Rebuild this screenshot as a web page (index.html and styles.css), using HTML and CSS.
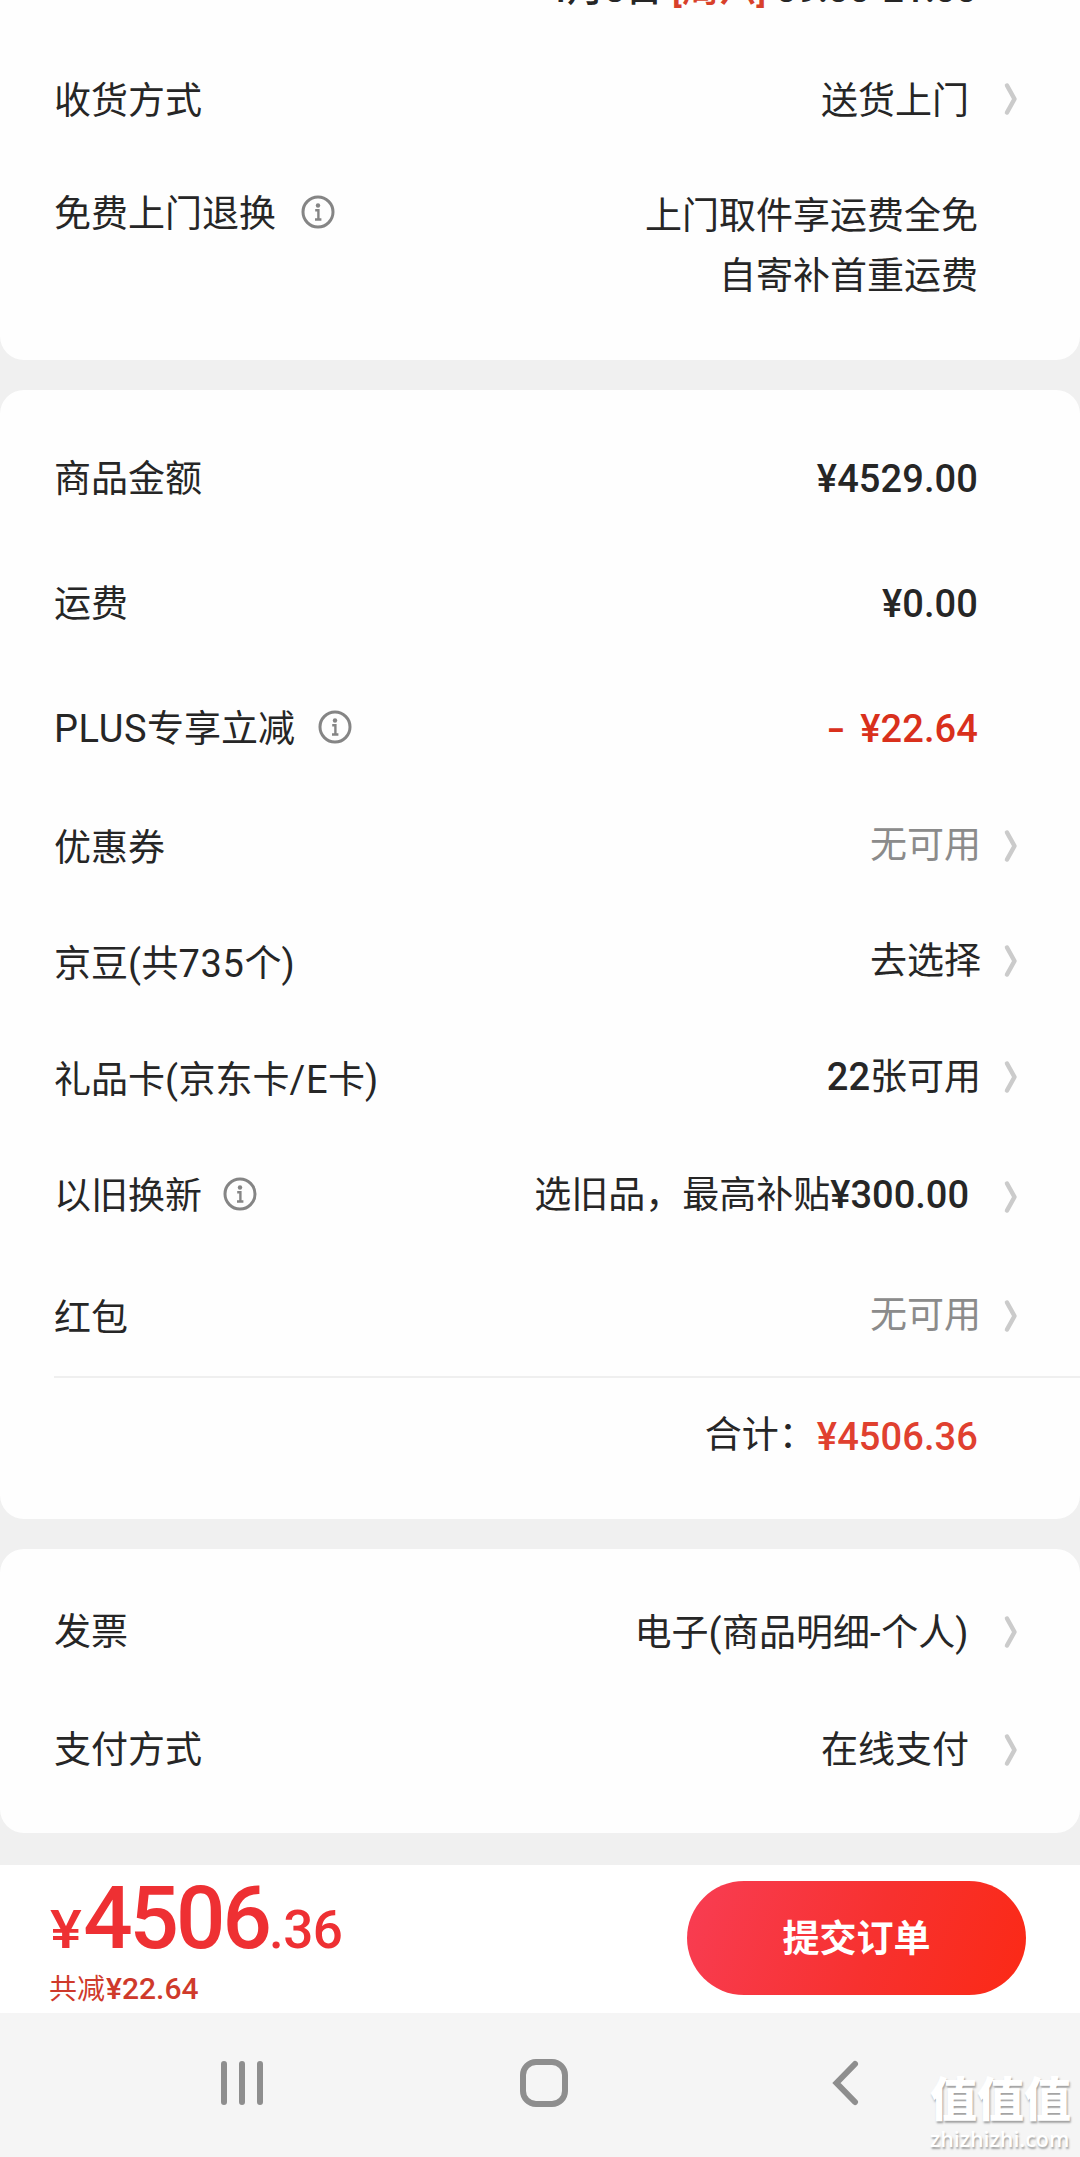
FILE: index.html
```
<!DOCTYPE html>
<html lang="zh-CN">
<head>
<meta charset="utf-8">
<title>填写订单</title>
<link rel="stylesheet" href="styles.css">
</head>
<body>
<svg class="sprite" width="0" height="0" aria-hidden="true">
  <symbol id="chevron" viewBox="0 0 16 34"><path d="M4 3.500 11.500 17 4 30.500" fill="none" stroke="#cbcbcb" stroke-width="4.500" stroke-linecap="round" stroke-linejoin="round"/></symbol>
  <symbol id="info" viewBox="0 0 34 34"><circle cx="17" cy="17" r="15" fill="none" stroke="#858585" stroke-width="3"/><circle cx="17" cy="10.500" r="2.200" fill="#858585"/><path d="M14.200 15.300h3.200v9M14 24.500h6.400" fill="none" stroke="#858585" stroke-width="2.400"/></symbol>
</svg>
<main class="page">
  <section class="card card--delivery">
    <div class="date"><span>4月8日 <em>[周六]</em> 09:00-21:00</span></div>
    <div class="row row--method">
      <span class="label">收货方式</span>
      <span class="value">送货上门</span>
      <svg class="chevron chevron--up"><use href="#chevron"/></svg>
    </div>
    <div class="row row--return">
      <span class="label">免费上门退换</span>
      <svg class="info info--wide"><use href="#info"/></svg>
      <span class="value value--lines">上门取件享运费全免<br>自寄补首重运费</span>
    </div>
  </section>

  <section class="card card--amounts">
    <div class="row row--sum"><span class="label">商品金额</span><span class="value num">¥4529.00</span></div>
    <div class="row row--sum"><span class="label">运费</span><span class="value num">¥0.00</span></div>
    <div class="row row--sum">
      <span class="label"><span class="latin">PLUS</span>专享立减</span>
      <svg class="info info--high info--plus"><use href="#info"/></svg>
      <span class="value num num--red"><span class="minus">-</span>¥22.64</span>
    </div>
    <div class="row row--coupon"><span class="label">优惠券</span><span class="value value--near value--muted">无可用</span><svg class="chevron chevron--up"><use href="#chevron"/></svg></div>
    <div class="row row--bean"><span class="label">京豆<span class="latin">(</span>共<span class="latin">735</span>个<span class="latin">)</span></span><span class="value value--near">去选择</span><svg class="chevron chevron--up"><use href="#chevron"/></svg></div>
    <div class="row row--card"><span class="label">礼品卡<span class="latin">(</span>京东卡<span class="latin">/E</span>卡<span class="latin">)</span></span><span class="value value--near"><b>22</b>张可用</span><svg class="chevron chevron--up"><use href="#chevron"/></svg></div>
    <div class="row row--trade">
      <span class="label">以旧换新</span>
      <svg class="info info--high"><use href="#info"/></svg>
      <span class="value">选旧品，最高补贴<b>¥300.00</b></span>
      <svg class="chevron"><use href="#chevron"/></svg>
    </div>
    <div class="row row--packet"><span class="label">红包</span><span class="value value--near value--muted">无可用</span><svg class="chevron chevron--up"><use href="#chevron"/></svg></div>
    <div class="row row--total"><span class="value">合计：</span><span class="num num--total">¥4506.36</span></div>
  </section>

  <section class="card card--payment">
    <div class="row"><span class="label">发票</span><span class="value">电子<span class="latin">(</span>商品明细<span class="latin">-</span>个人<span class="latin">)</span></span><svg class="chevron"><use href="#chevron"/></svg></div>
    <div class="row"><span class="label">支付方式</span><span class="value">在线支付</span><svg class="chevron"><use href="#chevron"/></svg></div>
  </section>

  <footer class="checkout">
    <div class="price">
      <div class="price__total"><span class="price__unit">¥</span><strong>4506</strong><span class="price__cents">.36</span></div>
      <div class="price__saved">共减<b>¥22.64</b></div>
    </div>
    <button class="submit" type="button">提交订单</button>
  </footer>

  <nav class="system">
    <svg class="system__recent" width="42" height="48" viewBox="0 0 42 48"><path d="M3 5v38M21 5v38M39 5v38" stroke="#8e8e8e" stroke-width="6" stroke-linecap="round"/></svg>
    <svg class="system__home" width="48" height="48" viewBox="0 0 48 48"><rect x="3" y="3" width="42" height="42" rx="13" fill="none" stroke="#8e8e8e" stroke-width="6"/></svg>
    <svg class="system__back" width="28" height="48" viewBox="0 0 28 48"><path d="M24 5 5.500 24 24 43" fill="none" stroke="#8e8e8e" stroke-width="6" stroke-linecap="round"/></svg>
    <div class="watermark"><span class="watermark__name">值值值</span><span class="watermark__site">zhizhizhi.com</span></div>
  </nav>
</main>
</body>
</html>
```
FILE: styles.css
```
* { box-sizing: border-box; }

body {
  margin: 0;
  background: #f0f0f0;
  color: #262626;
  font: 37px/60px Roboto, "Noto Sans CJK SC", sans-serif;
}

.sprite { display: block; height: 0; }

.page {
  width: 1080px;
  height: 2157px;
  overflow: hidden;
  display: flex;
  flex-direction: column;
}

.card {
  background: #fefefe;
  border-radius: 24px;
  margin-bottom: 30px;
  white-space: nowrap;
}

.card--delivery { height: 360px; border-radius: 0 0 24px 24px; }
.card--amounts { height: 1129px; padding-top: 26px; }
.card--payment { height: 284px; padding-top: 24px; margin-bottom: 32px; }

.date {
  height: 44px;
  padding-right: 103px;
  display: flex;
  justify-content: flex-end;
  align-items: flex-start;
  overflow: hidden;
}
.date span { margin-top: -41px; font-size: 37.2px; font-weight: 500; }
.date em { color: #d8402a; font-style: normal; }

.row {
  height: 118px;
  padding: 0 61px 0 54px;
  display: flex;
  align-items: center;
}

.row--method { height: 114px; }
.row--return { height: 202px; padding-top: 27px; padding-right: 102px; align-items: flex-start; }
.row--return .label { margin-top: -2px; }
.row--sum { height: 125px; padding-right: 102px; }
.row--coupon { height: 114px; }
.row--bean { height: 117px; }
.row--card, .row--trade { height: 116px; }
.row--card { padding-bottom: 2px; }
.row--packet { height: 122px; padding-top: 6px; }
.row--total { height: 116px; margin-left: 54px; padding: 0 102px 0 0; border-top: 2px solid #efefef; }

.label { flex: none; padding-top: 2px; }
.latin { font-size: 38px; letter-spacing: .6px; }
.value { margin-left: auto; padding-top: 2px; }
.value.num { padding-top: 0; }
.row:has(.chevron) .value { margin-right: 34px; }
.row .value.value--near { margin-right: 22px; padding-bottom: 6px; }
.row--trade .value { padding-bottom: 4px; }
.row--trade .chevron { margin-top: 2px; }
.row--total .value { margin-right: 1px; }
.value--muted { color: #8b8b8b; }
.value--lines { text-align: right; }

b, .num { font-size: 38px; font-weight: 500; }
.num { letter-spacing: .1px; }
.num--red { color: #d9301c; }
.num--total { color: #e0402f; padding-top: 4px; }
.minus { display: inline-block; width: 33px; transform: scaleX(1.4); transform-origin: left; }

.chevron { width: 16px; height: 34px; flex: none; }
.chevron--up { margin-bottom: 5px; }

.info { width: 34px; height: 34px; flex: none; margin-left: 21px; }
.info--wide { margin-left: 25px; margin-top: 10px; }
.info--high { margin-bottom: 4px; }
.info--plus { margin-left: 23px; }

.checkout {
  height: 148px;
  flex: none;
  padding: 0 54px 0 49px;
  background: #fff;
  display: flex;
  justify-content: space-between;
  align-items: flex-start;
}

.price__total {
  height: 102px;
  color: #ee3033;
  display: flex;
  align-items: baseline;
  font-size: 53px;
  font-weight: 500;
  line-height: 106px;
}
.price__total strong { font-size: 87px; font-weight: 500; letter-spacing: -3px; }
.price__unit { margin: 0 5px 0 1px; transform: scaleX(1.13); transform-origin: left; }
.price__cents { letter-spacing: -.5px; }
.price__saved { color: #cf3a2b; font-size: 28px; line-height: 44px; }
.price__saved b { font-size: 30px; margin-left: 1px; }

.submit {
  width: 339px;
  height: 114px;
  margin-top: 16px;
  padding: 4px 0 0;
  border: 0;
  border-radius: 57px;
  background: linear-gradient(110deg, #f83c50 5%, #f7312f 55%, #fb2a18 95%);
  color: #fff;
  font: 700 37px/110px Roboto, "Noto Sans CJK SC", sans-serif;
}

.system {
  position: relative;
  height: 144px;
  flex: none;
  padding: 46px 221px 0 221px;
  background: #f5f5f5;
  display: flex;
  justify-content: space-between;
  align-items: flex-start;
}
.system__home { margin-left: -7px; }

.watermark {
  position: absolute;
  right: 8px;
  bottom: 1px;
  width: 142px;
  height: 84px;
  color: #fff;
  text-shadow: 1px 2px 2px #a0a0a0;
  display: flex;
  flex-direction: column;
}
.watermark__name { font-size: 47px; font-weight: 900; line-height: 56px; }
.watermark__site { font: 600 21.400px/22px "Open Sans", sans-serif; }
```
